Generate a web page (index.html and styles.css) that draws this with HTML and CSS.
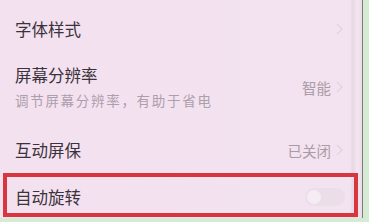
FILE: index.html
```html
<!DOCTYPE html>
<html lang="zh-CN">
<head>
    <meta charset="UTF-8">
    <meta name="viewport" content="width=device-width, initial-scale=1.0">
    <title>显示设置</title>
    <link rel="stylesheet" href="styles.css">
</head>
<body>
    <div class="screen">
        <div class="row row-first">
            <span class="title">字体样式</span>
            <svg class="chevron" viewBox="0 0 7 12"><path d="M1 1l5 5-5 5"/></svg>
        </div>
        <div class="row row-double">
            <div class="text">
                <div class="title">屏幕分辨率</div>
                <div class="sub">调节屏幕分辨率，有助于省电</div>
            </div>
            <span class="value">智能</span>
            <svg class="chevron" viewBox="0 0 7 12"><path d="M1 1l5 5-5 5"/></svg>
        </div>
        <div class="row row-third">
            <span class="title">互动屏保</span>
            <span class="value">已关闭</span>
            <svg class="chevron" viewBox="0 0 7 12"><path d="M1 1l5 5-5 5"/></svg>
        </div>
        <div class="row row-marked">
            <span class="title">自动旋转</span>
            <span class="toggle"><span class="knob"></span></span>
        </div>
    </div>
</body>
</html>
```

FILE: styles.css
```css
body {
    margin: 0;
    padding: 0;
    width: 369px;
    height: 222px;
    overflow: hidden;
    background-color: #d6ebd4; /* fond vert derriere le telephone */
    font-family: "Noto Sans CJK SC", "Noto Sans", sans-serif;
}

.screen {
    width: 362px;
    height: 218px;
    border-right: 1px solid #7d7a7c;
    background: linear-gradient(to right, #f3e1f0 0, #f3e2f0 350px, #e8d6e4 353px, #f4e6f1 357px, #ecdce9 362px);
}

.row {
    display: flex;
    align-items: center;
    padding: 0 19px 0 15px;
    box-sizing: border-box;
}

.row-first {
    height: 58px;
}

.row-double {
    height: 58px;
}

.row-third {
    height: 56px;
    padding-top: 12px;
}

.title {
    font-size: 16.5px;
    line-height: 20px;
    color: #3b333a;
    flex: 1;
}

.text {
    flex: 1;
    display: flex;
    flex-direction: column;
}

.text .title {
    margin-bottom: 6px;
}

.sub {
    font-size: 13.5px;
    line-height: 18px;
    letter-spacing: 1.7px;
    color: #ad9eab;
}

.value {
    font-size: 14.5px;
    color: #a99ba6;
    margin-right: 5px;
}

.chevron {
    width: 7px;
    height: 12px;
    fill: none;
    stroke: #e2d2df;
    stroke-width: 1.3;
}

.row-first .chevron {
    margin-left: auto;
}

.row-marked {
    margin: 1px 0 0 3px;
    width: 355px;
    height: 44px;
    border: 4px solid #d8363f;
    padding: 4px 9px 0 8px;
}

.toggle {
    display: block;
    width: 40px;
    height: 18px;
    border-radius: 9px;
    background-color: #ebdee9;
    position: relative;
}

.knob {
    position: absolute;
    left: 2px;
    top: 2px;
    width: 14px;
    height: 14px;
    border-radius: 50%;
    background-color: #f5edf3;
}
```
